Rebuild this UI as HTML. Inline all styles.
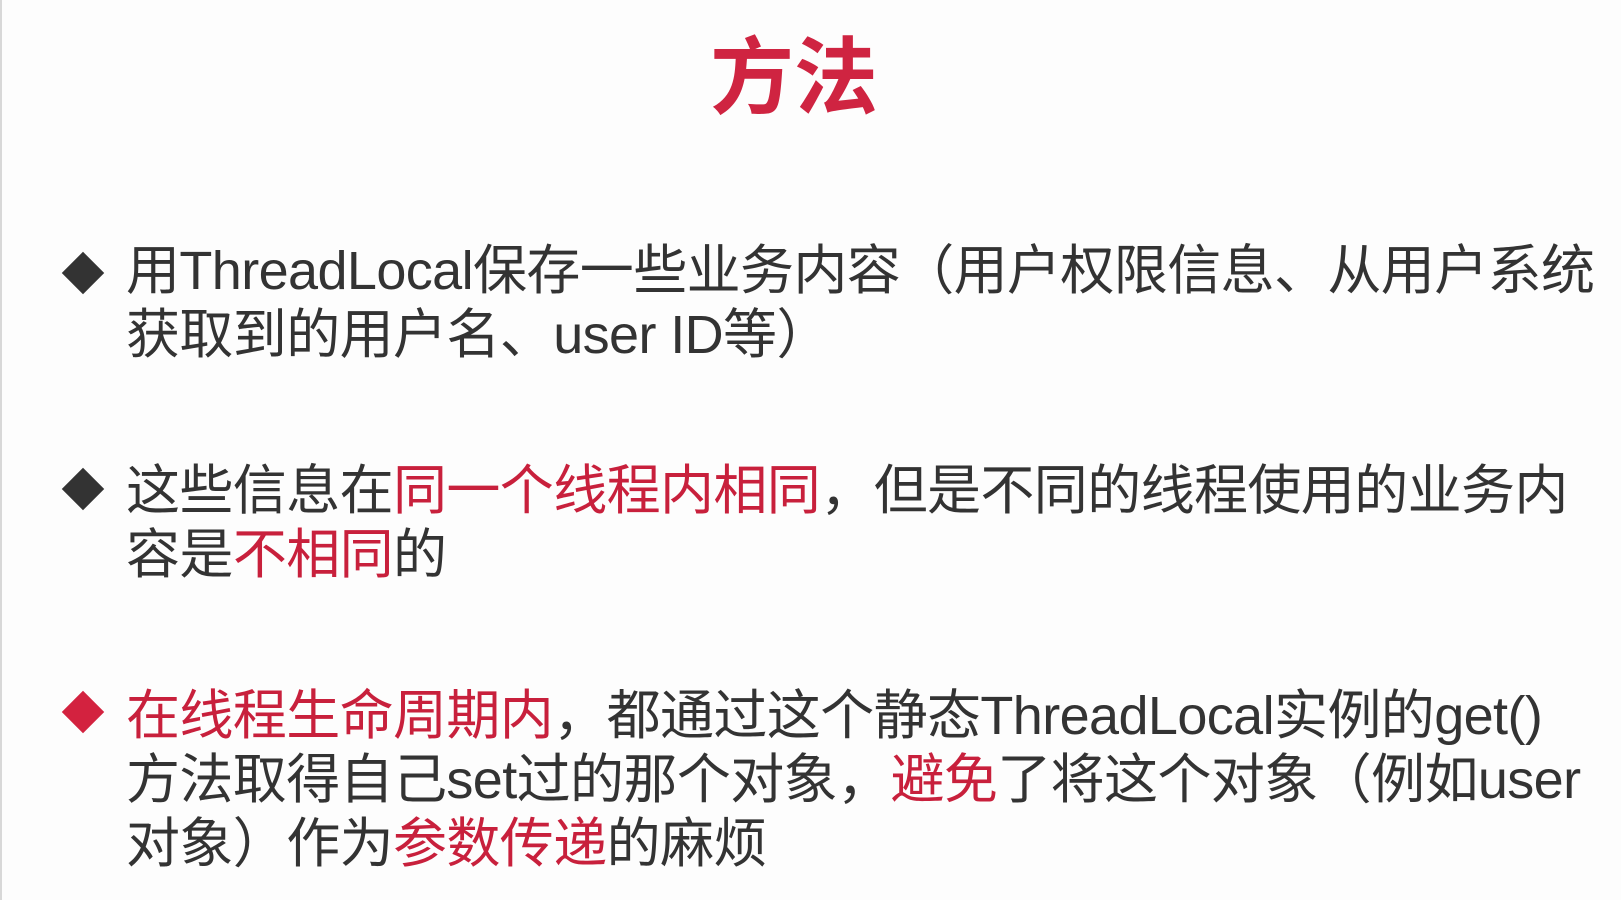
<!DOCTYPE html>
<html><head><meta charset="utf-8"><style>
html,body{margin:0;padding:0}
body{width:1621px;height:900px;background:#fdfdfd;position:relative;overflow:hidden;font-family:"Liberation Sans","Noto Sans CJK SC",sans-serif;color:#333}
.edge{position:absolute;left:0;top:0;width:2px;height:900px;background:#d8d8d8}
h1{position:absolute;left:0;width:1588px;text-align:center;top:22px;margin:0;font-size:84px;font-weight:bold;color:#cf2441;font-family:"Noto Sans CJK SC",sans-serif;line-height:100px}
.p{position:absolute;left:126px;font-size:54px;line-height:64px;white-space:nowrap;letter-spacing:-0.6px}
.r{color:#c8203c}
.d{position:absolute;width:30px;height:30px;transform:rotate(45deg);background:#333}
.d.red{background:#d3223f}
</style></head><body>
<div class="edge"></div>
<h1>方法</h1>
<div class="d" style="left:68px;top:258px"></div>
<div class="p" style="top:239px">用ThreadLocal保存一些业务内容（用户权限信息、从用户系统<br>获取到的用户名、user ID等）</div>
<div class="d" style="left:68px;top:474px"></div>
<div class="p" style="top:459px">这些信息在<span class="r">同一个线程内相同</span>，但是不同的线程使用的业务内<br>容是<span class="r">不相同</span>的</div>
<div class="d red" style="left:68px;top:697px"></div>
<div class="p" style="top:684px"><span class="r">在线程生命周期内</span>，都通过这个静态ThreadLocal实例的get()<br>方法取得自己set过的那个对象，<span class="r">避免</span>了将这个对象（例如user<br>对象）作为<span class="r">参数传递</span>的麻烦</div>
</body></html>
